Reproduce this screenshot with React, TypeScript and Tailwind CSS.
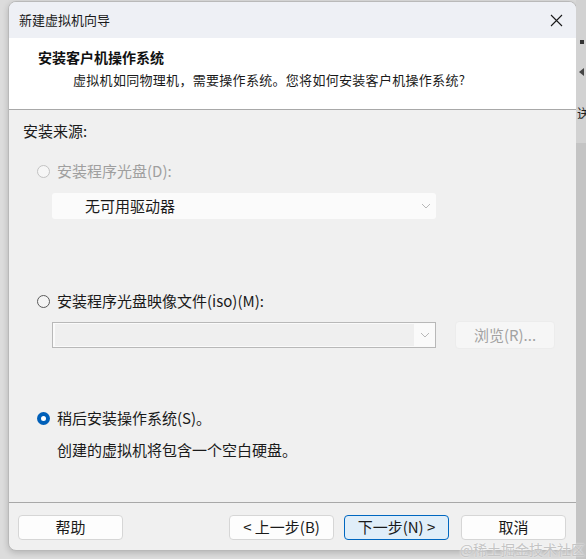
const font = { fontFamily: '"Noto Sans CJK SC", "Noto Sans", sans-serif' };

function Radio({ checked, disabled }: { checked?: boolean; disabled?: boolean }) {
  if (checked) {
    return (
      <span className="w-[13px] h-[13px] rounded-full bg-[#005fb8] flex items-center justify-center shrink-0">
        <span className="w-[5px] h-[5px] rounded-full bg-white" />
      </span>
    );
  }
  return (
    <span
      className={
        disabled
          ? "w-[13px] h-[13px] rounded-full border border-[#c2c2c2] bg-[#f6f6f6] shrink-0"
          : "w-[13px] h-[13px] rounded-full border border-[#5a5a5a] bg-[#f4f4f4] shrink-0"
      }
    />
  );
}

function Chevron() {
  return (
    <svg width="10" height="6" viewBox="0 0 10 6" className="shrink-0">
      <path d="M1 1 L5 5 L9 1" fill="none" stroke="#b8b8b8" strokeWidth="1" />
    </svg>
  );
}

function Btn({ label, primary }: { label: string; primary?: boolean }) {
  return (
    <div
      className={
        primary
          ? "w-[105px] h-[25px] rounded-[4px] border border-[#0067c0] bg-[#e0eef9] flex items-center justify-center text-[15px] text-[#1a1a1a]"
          : "w-[105px] h-[25px] rounded-[4px] border border-[#d6d6d6] bg-[#fdfdfd] flex items-center justify-center text-[15px] text-[#1a1a1a]"
      }
    >
      {label}
    </div>
  );
}

export default function App() {
  return (
    <div className="w-[586px] h-[559px] bg-[#dcdcdc] overflow-hidden relative" style={font}>
      <div className="absolute right-0 top-0 w-[10px] h-[559px] bg-[#d2d2d2] overflow-hidden">
        <div className="mt-[40px] ml-[4px] w-[4px] h-[4px] bg-[#333]" />
        <div className="mt-[24px] ml-[3px] w-0 h-0 border-y-[4px] border-y-transparent border-r-[5px] border-r-[#444]" />
        <div className="mt-[30px] ml-[1px] w-[9px] h-[13px] overflow-hidden text-[13px] text-[#222] leading-none">送</div>
        <div className="mt-[24px] h-[420px] bg-[#c4c4c4]" />
      </div>
      <div className="ml-[8px] mt-[1px] w-[569px] h-[550px] rounded-[8px] bg-[#f0f0f0] border border-[#b9b9b9] shadow-[0_2px_6px_rgba(0,0,0,0.18)] flex flex-col overflow-hidden">
        <div className="h-[36px] bg-[#eef0f5] flex items-center justify-between pl-[10px] pr-[13px] shrink-0">
          <span className="text-[13px] text-[#1a1a1a]">新建虚拟机向导</span>
          <svg width="13" height="13" viewBox="0 0 13 13">
            <path d="M1 1 L12 12 M12 1 L1 12" stroke="#1a1a1a" strokeWidth="1.1" />
          </svg>
        </div>
        <div className="h-[72px] bg-white border-b border-[#a8a8a8] pl-[29px] pt-[9px] shrink-0">
          <div className="text-[14px] font-bold text-[#111] h-[20px] leading-[20px]">安装客户机操作系统</div>
          <div className="text-[13px] tracking-[0.3px] text-[#1a1a1a] pl-[35px] mt-[3px] h-[20px] leading-[20px] whitespace-nowrap">
            虚拟机如同物理机，需要操作系统。您将如何安装客户机操作系统?
          </div>
        </div>
        <div className="flex-1 flex flex-col pl-[14px] pt-[11px] text-[15px] text-[#1a1a1a]">
          <div className="h-[20px] leading-[20px]">安装来源:</div>
          <div className="mt-[20px] ml-[14px] h-[20px] flex items-center gap-[7px] text-[#9f9f9f]">
            <Radio disabled />
            <span>安装程序光盘(D):</span>
          </div>
          <div className="mt-[12px] ml-[29px] w-[384px] h-[26px] bg-[#fbfbfb] rounded-[3px] flex items-center justify-between pl-[33px] pr-[5px]">
            <span>无可用驱动器</span>
            <Chevron />
          </div>
          <div className="mt-[72px] ml-[14px] h-[20px] flex items-center gap-[7px]">
            <Radio />
            <span>安装程序光盘映像文件(iso)(M):</span>
          </div>
          <div className="mt-[10px] ml-[29px] flex items-center gap-[19px]">
            <div className="w-[384px] h-[26px] border border-[#b8b8b8] bg-[#fafafa] flex items-center">
              <div className="w-[359px] h-[22px] ml-[2px] bg-[#efefef]" />
              <div className="flex-1 flex justify-center">
                <Chevron />
              </div>
            </div>
            <div className="w-[100px] h-[28px] rounded-[4px] bg-[#f6f6f6] border border-[#ececec] flex items-center justify-center text-[#a2a2a2]">
              浏览(R)...
            </div>
          </div>
          <div className="mt-[59px] ml-[14px] h-[20px] flex items-center gap-[7px]">
            <Radio checked />
            <span>稍后安装操作系统(S)。</span>
          </div>
          <div className="mt-[12px] ml-[34px] h-[20px] leading-[20px]">创建的虚拟机将包含一个空白硬盘。</div>
        </div>
        <div className="h-[48px] border-t border-[#a8a8a8] flex items-start pt-[12px] pl-[9px] shrink-0">
          <Btn label="帮助" />
          <div className="ml-[106px]">
            <Btn label="< 上一步(B)" />
          </div>
          <div className="ml-[10px]">
            <Btn label="下一步(N) >" primary />
          </div>
          <div className="ml-[12px]">
            <Btn label="取消" />
          </div>
        </div>
      </div>
      <div
        className="absolute right-[1px] bottom-[3px] text-[14px] text-[#c4c4c4] leading-none"
        style={{ textShadow: "0 0 2px #fff" }}
      >
        @稀土掘金技术社区
      </div>
    </div>
  );
}
